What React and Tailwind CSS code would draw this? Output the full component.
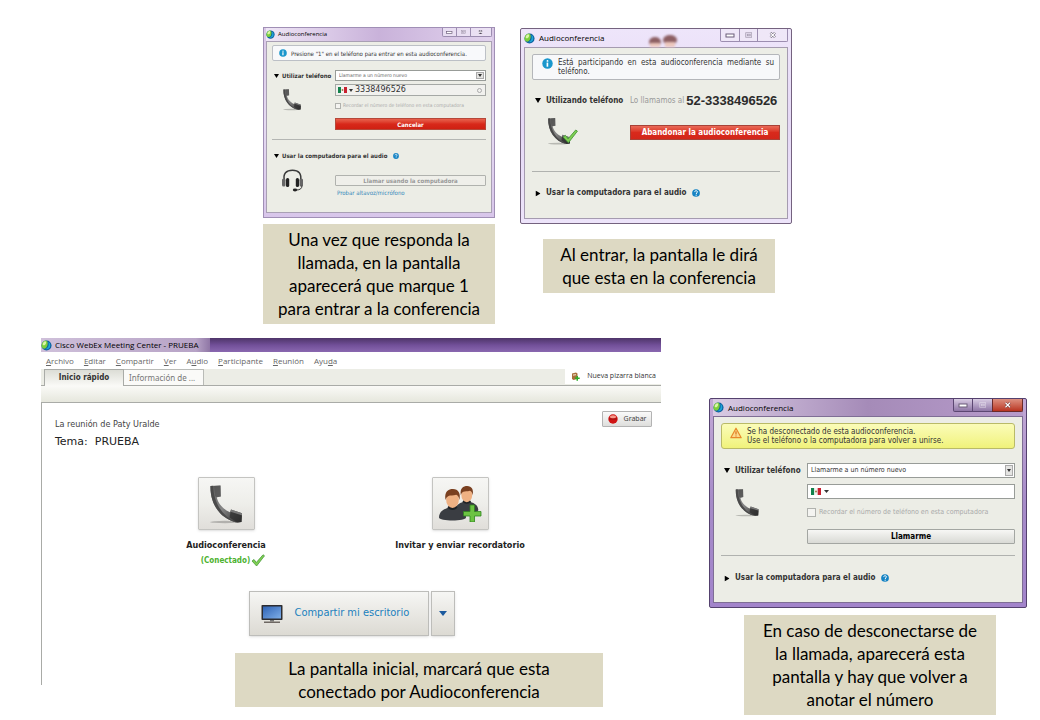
import React from "react";
import clsx from "clsx";

const MENU = [
  ["", "A", "rchivo"],
  ["", "E", "ditar"],
  ["", "C", "ompartir"],
  ["", "V", "er"],
  ["A", "u", "dio"],
  ["", "P", "articipante"],
  ["", "R", "eunión"],
  ["Ayu", "d", "a"],
];

function App() {
  return (
    <main className="min-h-screen bg-white pb-1 font-['DejaVu_Sans_Condensed','DejaVu_Sans',sans-serif] text-[#333]">
      <div className="flex justify-center gap-[25px] pl-[15px] pt-[27px]">
        <section className="w-full max-w-[232px]">
          <CallingWindow />
          <Caption className="mt-[6px]">
            Una vez que responda la
            <br />
            llamada, en la pantalla
            <br />
            aparecerá que marque 1
            <br />
            para entrar a la conferencia
          </Caption>
        </section>
        <section className="w-full max-w-[272px] pt-px">
          <ConnectedWindow />
          <Caption className="ml-[23px] mr-[17px] mt-[15px]">
            Al entrar, la pantalla le dirá
            <br />
            que esta en la conferencia
          </Caption>
        </section>
      </div>

      <div className="mt-[14px] flex items-start gap-12 pl-[41px] pr-[13px]">
        <section className="min-w-0 flex-1">
          <MeetingCenter />
          <Caption className="relative -mt-8 ml-[194px] mr-[58px]">
            La pantalla inicial, marcará que esta
            <br />
            conectado por Audioconferencia
          </Caption>
        </section>
        <section className="w-[318px] pt-[60px]">
          <DisconnectedWindow />
          <Caption className="ml-[35px] mr-[31px] mt-[7px]">
            En caso de desconectarse de
            <br />
            la llamada, aparecerá esta
            <br />
            pantalla y hay que volver a
            <br />
            anotar el número
          </Caption>
        </section>
      </div>
    </main>
  );
}

export default App;

const Caption = ({ className, children }) => (
  <p
    className={clsx(
      "whitespace-nowrap bg-[#ddd9c3] py-1 text-center font-['Lato',sans-serif] text-[17px] leading-[23px] text-black",
      className
    )}
  >
    {children}
  </p>
);

/* ---------- windows ---------- */

const CallingWindow = () => (
  <div className="border border-[#a08fb5] bg-linear-to-b from-[#d9c7e6] via-[#e6dbf2] to-[#d8c6ea] px-[2px] pb-[4px]">
    <div className="flex h-[13px] items-start justify-between bg-linear-to-r from-[#efe6f6] via-[#c9b2da] to-[#e2d3ee]">
      <h2 className="flex h-[13px] items-center gap-[3px] font-['Open_Sans',sans-serif] text-[6px] text-black">
        <Globe className="size-[9px]" />
        Audioconferencia
      </h2>
      <WindowControls tone="pale" className="h-[9px] w-[50px]" />
    </div>
    <div className="border border-[#a9a0b4] bg-[#ecede6] px-[5px] pb-[15px] pt-[3px]">
      <p className="flex h-[16px] items-center gap-1 rounded-xs border border-[#bcc0c6] bg-[#f8f9fb] pl-[6px] text-[6px]">
        <InfoDot className="size-[8px]" />
        Presione "1" en el teléfono para entrar en esta audioconferencia.
      </p>
      <div className="mt-[9px] grid grid-cols-[63px_1fr]">
        <div>
          <Disclosure open small>
            Utilizar teléfono
          </Disclosure>
          <Phone className="ml-[10px] mt-[7px] h-[23px] w-[20px]" />
        </div>
        <div>
          <NumberSelect className="h-[11px] text-[5px] leading-[9px] text-[#666]" />
          <div className="mt-[3px] flex h-[12px] items-center gap-[2px] border border-[#a5a8a5] bg-[#f1f1ee] px-[2px]">
            <Flag className="h-[6px] w-[9px]" />
            <Triangle className="h-[3px] w-[4px]" />
            <input
              aria-label="Número de teléfono"
              defaultValue="3338496526"
              className="min-w-0 flex-1 bg-transparent font-['DejaVu_Sans',sans-serif] text-[8px] leading-[10px] text-[#333] outline-none"
            />
            <span className="mr-px size-[5px] rounded-full border border-[#aaa]" />
          </div>
          <Remember id="rememberCalling" className="mt-[6px] h-[8px] gap-[2px] text-[5px]" box="size-[6px]" />
          <button className="mt-[8px] flex h-[12px] w-full items-center justify-center border border-[#b5483a] bg-linear-to-b from-[#e8604c] via-[#d8281a] to-[#cf2012] text-[6px] font-bold text-white">
            Cancelar
          </button>
        </div>
      </div>
      <hr className="mt-[9px] border-[#b4b6b3]" />
      <div className="mt-[10px] flex items-center gap-[6px]">
        <Disclosure open small>
          Usar la computadora para el audio
        </Disclosure>
        <HelpDot className="size-[6px]" />
      </div>
      <div className="mt-[8px] grid grid-cols-[63px_1fr]">
        <Headset className="ml-[9px] h-[23px] w-[24px]" />
        <div className="pt-[6px]">
          <button
            disabled
            className="flex h-[11px] w-full items-center justify-center rounded-[1px] border border-[#b0b2ae] bg-[#efefea] text-[6px] font-bold text-[#999]"
          >
            Llamar usando la computadora
          </button>
          <a href="#prueba" className="ml-[2px] mt-[3px] block text-[6px] leading-[8px] text-[#3689bb]">
            Probar altavoz/micrófono
          </a>
        </div>
      </div>
    </div>
  </div>
);

const ConnectedWindow = () => (
  <div className="rounded-[2px] border border-[#74627f] bg-linear-to-b from-[#eee5fa] via-[#e5d8f5] to-[#ede4fa] px-[3px] pb-[4px]">
    <div className="flex h-[18px] items-start justify-between">
      <h2 className="flex h-[18px] items-center gap-[4px] font-['Open_Sans',sans-serif] text-[8px] text-black">
        <Globe className="size-[11px]" />
        Audioconferencia
      </h2>
      <svg className="mt-[4px] h-[14px] w-[40px] blur-[1px]" viewBox="0 0 40 14" aria-hidden="true">
        <ellipse cx="13" cy="9" rx="6" ry="5" fill="#8d5f63" />
        <ellipse cx="28" cy="7" rx="7" ry="5" fill="#8d5f63" />
        <path d="M8 10h10v4H8zM23 9h10v5H23z" fill="#ecc7bd" />
      </svg>
      <WindowControls tone="pale" className="h-[13px] w-[68px]" />
    </div>
    <div className="border border-[#a59bb0] bg-[#ecede6] px-[7px] pb-[19px] pt-[6px]">
      <p className="flex h-[26px] items-start gap-[5px] rounded-[2px] border border-[#b4b6ba] bg-[#f7f8fa] py-[3px] pl-[9px] pr-[5px] text-justify text-[8px] leading-[9px]">
        <InfoDot className="size-[11px] shrink-0" />
        <span>Está participando en esta audioconferencia mediante su teléfono.</span>
      </p>
      <div className="mt-[12px] grid grid-cols-[98px_1fr]">
        <div>
          <Disclosure open className="h-[17px]">
            Utilizando teléfono
          </Disclosure>
          <span className="relative ml-[14px] mt-[8px] block w-[32px]">
            <Phone className="h-[28px] w-[26px]" />
            <Check className="absolute bottom-0 right-0 h-[17px] w-[16px]" />
          </span>
        </div>
        <div>
          <p className="flex h-[17px] items-center gap-[2px] whitespace-nowrap text-[8px] text-[#999]">
            Lo llamamos al
            <strong className="font-['Liberation_Sans',sans-serif] text-[13px] text-[#2b2b2b]">52-3338496526</strong>
          </p>
          <button className="mt-[16px] flex h-[15px] w-full items-center justify-center border border-[#a84238] bg-linear-to-b from-[#ea6a58] via-[#d92a1c] to-[#d3261a] text-[8px] font-bold text-white">
            Abandonar la audioconferencia
          </button>
        </div>
      </div>
      <hr className="mt-[26px] border-[#b0b2af]" />
      <div className="mt-[15px] flex items-center gap-[6px]">
        <Disclosure>Usar la computadora para el audio</Disclosure>
        <HelpDot className="size-[8px]" />
      </div>
    </div>
  </div>
);

const DisconnectedWindow = () => (
  <div className="rounded-[2px] border border-[#54416e] bg-linear-to-b from-[#c3a9d6] via-[#a68bc8] to-[#a284cb] px-[3px] pb-[4px]">
    <div className="flex h-[17px] items-start justify-between bg-linear-to-r from-[#d9cbe3] via-[#a58bb8] to-[#b79bcb]">
      <h2 className="flex h-[17px] items-center gap-[4px] font-['Open_Sans',sans-serif] text-[8px] text-black">
        <Globe className="size-[11px]" />
        Audioconferencia
      </h2>
      <WindowControls tone="purple" className="h-[13px] w-[70px]" />
    </div>
    <div className="border border-[#7f6e95] bg-[#ecede6] px-[7px] pb-[18px] pt-[6px]">
      <p className="flex h-[26px] items-start gap-[5px] rounded-[3px] border border-[#b9ba68] bg-linear-to-b from-[#fbfcb8] to-[#f0f27a] px-[8px] py-[3px] text-[8px] leading-[9px]">
        <Warning className="size-[12px] shrink-0" />
        <span>
          Se ha desconectado de esta audioconferencia.
          <br />
          Use el teléfono o la computadora para volver a unirse.
        </span>
      </p>
      <div className="mt-[14px] grid grid-cols-[86px_1fr]">
        <div>
          <Disclosure open className="h-[15px]">
            Utilizar teléfono
          </Disclosure>
          <Phone className="ml-[13px] mt-[10px] h-[29px] w-[26px]" />
        </div>
        <div>
          <NumberSelect className="h-[15px] text-[7px] leading-[13px] text-[#333]" />
          <div className="mt-[6px] flex h-[15px] items-center gap-[3px] border border-[#989c98] bg-white px-[3px]">
            <Flag className="h-[7px] w-[10px]" />
            <Triangle className="h-[3px] w-[5px]" />
            <input aria-label="Número" className="min-w-0 flex-1 bg-transparent text-[8px] leading-[12px] outline-none" />
          </div>
          <Remember id="rememberNew" className="mt-[8px] h-[10px] gap-[3px] text-[7px]" box="size-[9px]" />
          <button className="mt-[12px] flex h-[15px] w-full items-center justify-center rounded-[1px] border border-[#a3a6a2] bg-linear-to-b from-[#f7f7f5] to-[#d9dad5] text-[8px] font-bold text-black">
            Llamarme
          </button>
        </div>
      </div>
      <hr className="mt-[11px] border-[#b0b2af]" />
      <div className="mt-[16px] flex items-center gap-[6px]">
        <Disclosure>Usar la computadora para el audio</Disclosure>
        <HelpDot className="size-[8px]" />
      </div>
    </div>
  </div>
);

const MeetingCenter = () => (
  <div>
    <h1 className="flex h-[14px] items-center gap-[3px] bg-linear-to-r from-[#cfc0da] from-0% via-[#b7a3c6] via-25% to-[#62437f] to-30% font-['Open_Sans',sans-serif] text-[8px] text-black">
      <Globe className="size-[11px]" />
      <span className="whitespace-nowrap">Cisco WebEx Meeting Center - PRUEBA</span>
      <span className="ml-2 h-full flex-1 bg-linear-to-b from-[#4e3569] via-[#714f98] to-[#8a68b0]" />
    </h1>
    <nav className="flex h-[17px] items-center gap-[10px] pl-[5px] font-['Open_Sans',sans-serif] text-[8px] text-[#666]">
      {MENU.map(([before, key, after]) => (
        <a key={before + key + after} href="#menu">
          {before}
          <u>{key}</u>
          {after}
        </a>
      ))}
    </nav>
    <div className="flex h-[17px] items-stretch border-b border-[#a9aba7] bg-[#ecede6] pl-[3px] text-[8px]">
      <button className="-mb-px w-[80px] border-x border-t border-[#a9aba7] bg-linear-to-b from-[#dcddd6] to-[#fafaf7] text-center font-bold">
        Inicio rápido
      </button>
      <button className="w-[80px] border-r border-t border-[#b9bbb7] bg-[#fafaf8] pl-[5px] text-left font-['Noto_Sans',sans-serif] text-[#777]">
        Información de ...
      </button>
      <button className="mb-px ml-auto flex items-center gap-[7px] bg-white pl-[6px] pr-[5px] font-['Open_Sans',sans-serif] text-[7px] text-[#333]">
        <Whiteboard className="size-[9px]" />
        Nueva pizarra blanca
      </button>
    </div>
    <div className="h-[17px] border-b border-[#a9aba7] bg-linear-to-b from-[#fafaf7] to-[#e6e7dd]" />
    <div className="border-l border-[#a9aba7] pb-[49px]">
      <div className="flex items-start justify-between pl-[13px] pr-[9px] pt-[8px]">
        <div className="pt-[7px]">
          <p className="text-[9px] leading-[12px] text-[#444]">La reunión de Paty Uralde</p>
          <p className="mt-[5px] flex gap-[7px] font-['DejaVu_Sans',sans-serif] text-[11px] leading-[14px] text-[#222]">
            <span>Tema:</span>
            <span>PRUEBA</span>
          </p>
        </div>
        <button className="flex h-[16px] w-[50px] items-center justify-center gap-[6px] rounded-[1px] border border-[#b3b3b3] bg-linear-to-b from-[#fafafa] to-[#dededc] font-['Noto_Sans',sans-serif] text-[7px] text-[#444]">
          <RecordDot className="size-[10px]" />
          Grabar
        </button>
      </div>

      <div className="mt-[28px] grid grid-cols-2 pl-[67px] pr-[84px] text-center text-[9px]">
        <div className="flex flex-col items-center">
          <button aria-label="Audioconferencia" className={TILE}>
            <Phone className="h-[40px] w-[36px]" />
          </button>
          <p className="mt-[9px] leading-[12px] font-bold text-[#222]">Audioconferencia</p>
          <p className="mt-[3px] flex items-center gap-px pl-[14px] text-[8px] font-bold leading-[13px] text-[#4cb22f]">
            (Conectado)
            <Check className="h-[13px] w-[14px]" />
          </p>
        </div>
        <div className="flex flex-col items-center">
          <button aria-label="Invitar" className={TILE}>
            <People className="h-[36px] w-[44px]" />
          </button>
          <p className="mt-[9px] leading-[12px] font-bold text-[#222]">Invitar y enviar recordatorio</p>
        </div>
      </div>

      <div className="mt-[24px] flex h-[45px] justify-center gap-[2px]">
        <button className="flex w-[180px] items-center gap-[12px] whitespace-nowrap border border-[#bdbdba] bg-linear-to-b from-[#f6f6f4] to-[#dcdad3] pl-[11px] text-[11px] text-[#1a80bd] shadow-sm">
          <Monitor className="h-[20px] w-[22px]" />
          Compartir mi escritorio
        </button>
        <button
          aria-label="Más opciones"
          className="flex w-[24px] items-center justify-center border border-[#bdbdba] bg-linear-to-b from-[#f6f6f4] to-[#dcdad3] text-[#1c5a9e] shadow-sm"
        >
          <Triangle className="h-[5px] w-[8px]" />
        </button>
      </div>
    </div>
  </div>
);

const TILE =
  "flex h-[53px] w-[57px] items-center justify-center rounded-[1px] border border-[#c4c4c1] bg-linear-to-b from-[#f6f6f4] via-[#eeeeea] to-[#e0deda] shadow-sm";

/* ---------- shared controls ---------- */

const WindowControls = ({ tone, className }) => {
  const purple = tone === "purple";
  const cell = purple
    ? "border-[#5c4772] bg-linear-to-b from-[#d9cce3] to-[#8f76a6] text-white"
    : "border-[#9c8db0] bg-[#efe8f6]/70 text-[#54495f]";
  return (
    <div className={clsx("flex", className)}>
      <button aria-label="Minimizar" className={clsx("flex flex-1 items-center justify-center rounded-bl-[2px] border border-t-0", cell)}>
        <svg viewBox="0 0 10 6" className="h-1/2" fill="#fff" stroke="#6b5c78">
          <rect x="1" y="2" width="8" height="3" />
        </svg>
      </button>
      <button aria-label="Maximizar" className={clsx("flex flex-1 items-center justify-center border-b", cell)}>
        <svg viewBox="0 0 10 8" className="h-1/2 opacity-50" fill="none" stroke="currentColor">
          <rect x="1" y="1" width="8" height="6" />
          <rect x="3" y="3" width="4" height="2" />
        </svg>
      </button>
      <button
        aria-label="Cerrar"
        className={clsx(
          "flex w-[45%] items-center justify-center rounded-br-[2px] border border-t-0",
          purple ? "border-[#6b2a2a] bg-linear-to-b from-[#dc8f80] to-[#b8321f]" : cell
        )}
      >
        <svg viewBox="0 0 10 8" className="h-1/2" fill="none">
          <path d="M2 1l6 6M8 1L2 7" stroke={purple ? "#6b3030" : "#54495f"} strokeWidth="3" />
          <path d="M2 1l6 6M8 1L2 7" stroke="#fff" strokeWidth="1.600" />
        </svg>
      </button>
    </div>
  );
};

const Disclosure = ({ open, small, className, children }) => (
  <button
    aria-expanded={!!open}
    className={clsx(
      "flex items-center whitespace-nowrap font-bold text-[#333]",
      small ? "h-[11px] gap-[3px] pl-[2px] text-[6px]" : "gap-[5px] pl-[3px] text-[8px] leading-[12px]",
      className
    )}
  >
    <Triangle className={clsx(small ? "h-[4px] w-[5px]" : "h-[5px] w-[6px]", "text-black", !open && "-rotate-90")} />
    {children}
  </button>
);

const NumberSelect = ({ className }) => (
  <div className="relative flex">
    <select
      aria-label="Número"
      className={clsx("w-full appearance-none border border-[#989c98] bg-white pl-[3px] outline-none", className)}
    >
      <option>Llamarme a un número nuevo</option>
    </select>
    <span className="pointer-events-none absolute inset-y-[2px] right-[2px] flex w-[8px] items-center justify-center border border-[#aaa] bg-[#e4e4e2]">
      <Triangle className="h-[3px] w-[4px]" />
    </span>
  </div>
);

const Remember = ({ id, className, box }) => (
  <div className={clsx("flex items-center whitespace-nowrap text-[#aaa]", className)}>
    <input id={id} type="checkbox" className={clsx("shrink-0 appearance-none border border-[#b0b2ae] bg-[#f4f4f1]", box)} />
    <label htmlFor={id}>Recordar el número de teléfono en esta computadora</label>
  </div>
);

/* ---------- icons ---------- */

const Triangle = ({ className }) => (
  <svg viewBox="0 0 8 6" preserveAspectRatio="none" className={clsx("shrink-0", className)} fill="currentColor">
    <path d="M0 0h8L4 6z" />
  </svg>
);

const Globe = ({ className }) => (
  <svg viewBox="0 0 12 12" className={clsx("shrink-0", className)}>
    <circle cx="6" cy="6" r="5.5" fill="#0c5f9e" />
    <path d="M5 .6C1.500 1.200-.2 5 .8 8c2 2.500 5 1.500 6-1.500S7.500.8 5 .6z" fill="#7ccf3c" />
    <path d="M4 1.500C2.500 2 1.500 4 2 5.500c1.500.8 3-.5 3.500-2S5 1.200 4 1.500z" fill="#dcf5a8" />
    <path d="M8 2c2 1 3 4 1.500 6.500C8 10 6 10.500 4.500 10 8 9 9 6 8 2z" fill="#1fa6d8" />
  </svg>
);

const InfoDot = ({ className }) => (
  <svg viewBox="0 0 12 12" className={clsx("shrink-0", className)}>
    <circle cx="6" cy="6" r="5.700" fill="#1a97cc" />
    <circle cx="6" cy="3.200" r="1" fill="#fff" />
    <path d="M5 5h1.800v4.500H5z" fill="#fff" />
  </svg>
);

const HelpDot = ({ className }) => (
  <svg viewBox="0 0 12 12" className={clsx("shrink-0", className)}>
    <circle cx="6" cy="6" r="5.800" fill="#1583c4" />
    <path d="M4 4.600c.1-2.800 4.300-2.600 4.100-.2C8 5.800 6.200 5.800 6.200 7.500" fill="none" stroke="#fff" strokeWidth="1.500" />
    <circle cx="6.200" cy="9.200" r=".9" fill="#fff" />
  </svg>
);

const Warning = ({ className }) => (
  <svg viewBox="0 0 12 12" className={className}>
    <path d="M6 1.200L11.200 10.700H.8z" fill="#fbd98a" stroke="#e8892b" strokeWidth="1.200" strokeLinejoin="round" />
    <path d="M6 4.200v3.300M6 8.400v1.200" stroke="#d9721c" strokeWidth="1.200" />
  </svg>
);

const Flag = ({ className }) => (
  <svg viewBox="0 0 9 6" preserveAspectRatio="none" className={clsx("shrink-0", className)}>
    <path d="M0 0h3v6H0z" fill="#12824c" />
    <path d="M3 0h3v6H3z" fill="#f3f3f0" />
    <path d="M6 0h3v6H6z" fill="#c8202f" />
    <circle cx="4.500" cy="3" r=".9" fill="#9b7a4a" />
  </svg>
);

const Phone = ({ className }) => (
  <svg viewBox="0 0 36 40" className={className}>
    <defs>
      <linearGradient id="handset" x1="0" y1="0" x2="1" y2="1">
        <stop offset="0" stopColor="#606060" />
        <stop offset=".5" stopColor="#858585" />
        <stop offset="1" stopColor="#2a2a2a" />
      </linearGradient>
    </defs>
    <ellipse cx="17" cy="38" rx="15" ry="1.200" fill="#000" opacity=".22" />
    <path d="M2.500 2L12.500 1.500l.3 11-4 .8c1 6 6.500 12 13.200 15l1-2.800L34 29.300l-.5 8.600-5 .6C12 34.500 2 20 2.500 2z" fill="url(#handset)" />
    <path d="M2.500 2l2.700-.2c.4 17 9 30.500 23.300 36.700C12 34.500 2 20 2.500 2z" fill="#4a4a4a" />
    <path d="M6 2l6.500-.5.3 11-4 .8L7 12z" fill="#4d4d4d" opacity=".6" />
    <path d="M23 25.500L34 29.300v2.200l-11.500-3.700z" fill="#777" />
    <path d="M22.500 27.800L34 31.500l-.5 6.400-4 .5-8-5z" fill="#2d2d2d" opacity=".7" />
  </svg>
);

const Check = ({ className }) => (
  <svg viewBox="0 0 14 13" className={clsx("shrink-0", className)}>
    <path d="M1 7l2-1.500 2.300 3L12 .8l1.500 1L5.600 12z" fill="#7fcf52" stroke="#4a9a3c" strokeWidth=".8" strokeLinejoin="round" />
  </svg>
);

const Headset = ({ className }) => (
  <svg viewBox="0 0 24 23" className={className} fill="none">
    <path d="M3.500 12C1.500 4.500 5.500 1.200 11.500 1.200S21 4.500 19.500 12" stroke="#3a3a3a" strokeWidth="1.500" />
    <rect x="1" y="9.500" width="3.500" height="8" rx="1.500" fill="#666" />
    <rect x="5" y="9" width="3.200" height="9" rx="1.500" fill="#222" />
    <rect x="14.800" y="9" width="3.200" height="9" rx="1.500" fill="#222" />
    <rect x="18.500" y="9.500" width="3.500" height="8" rx="1.500" fill="#666" />
    <path d="M21 16.500c0 3-2 4.500-5.500 4.500" stroke="#333" />
    <ellipse cx="14" cy="21" rx="2.200" ry="1.400" fill="#222" />
  </svg>
);

const Person = ({ transform }) => (
  <g transform={transform}>
    <path d="M-2 28.500c0-5.500 4-8 9.500-10h8c5.500 2 9.500 4.500 9.500 10 0 4-27 4-27 0z" fill="#3a3d42" />
    <path d="M6.500 18.300c2 3.500 8 3.500 10 0l-2-2.300h-6z" fill="#1f2124" />
    <ellipse cx="11.500" cy="10.500" rx="6.400" ry="8.500" fill="#efb183" />
    <path d="M4.500 11C3 2.500 7.500 0 12 0c5.300.2 7.800 4 6.500 11-.8-3.500-1.800-4.800-3.300-5.300-3 1-6 .5-7.700 1.200C6 7.700 5.200 9 4.500 11z" fill="#7a4020" />
  </g>
);

const People = ({ className }) => (
  <svg viewBox="0 0 44 36" className={className}>
    <Person transform="translate(19 0) scale(.85)" />
    <Person transform="translate(3 3)" />
    <path d="M32 19h4.500v6.500H43V30h-6.500v6H32v-6h-6.500v-4.500H32z" fill="#6cc342" stroke="#2f8420" strokeWidth=".8" />
  </svg>
);

const Monitor = ({ className }) => (
  <svg viewBox="0 0 22 20" className={clsx("shrink-0", className)}>
    <defs>
      <linearGradient id="screen" x1="0" y1="0" x2="1" y2="1">
        <stop offset="0" stopColor="#2f63b5" />
        <stop offset="1" stopColor="#7eaee8" />
      </linearGradient>
    </defs>
    <rect x=".5" y="1" width="21" height="15" rx=".8" fill="#2c2c30" />
    <rect x="2" y="2.500" width="18" height="12" fill="url(#screen)" />
    <path d="M9 16h4v1.500H9z" fill="#777" />
    <path d="M3 17.500h16V19H3z" fill="#6e6863" />
  </svg>
);

const RecordDot = ({ className }) => (
  <svg viewBox="0 0 10 10" className={className}>
    <circle cx="5" cy="5" r="4.700" fill="#d01414" />
    <ellipse cx="5" cy="2.800" rx="3" ry="1.600" fill="#f59a8c" />
    <path d="M1 5h8" stroke="#8e0d0d" strokeWidth=".8" />
  </svg>
);

const Whiteboard = ({ className }) => (
  <svg viewBox="0 0 9 9" className={className}>
    <path d="M1 1.500l4-1 1.500 1v5.500l-4 1L1 7z" fill="#a8703c" />
    <path d="M2 2.500l3-.6v1.300l-3 .6z" fill="#e8d3b5" />
    <path d="M5.500 4h1.500v1.600h1.700v1.500H7v1.700H5.500V7.100H3.900V5.600h1.600z" fill="#2fae2a" />
  </svg>
);
